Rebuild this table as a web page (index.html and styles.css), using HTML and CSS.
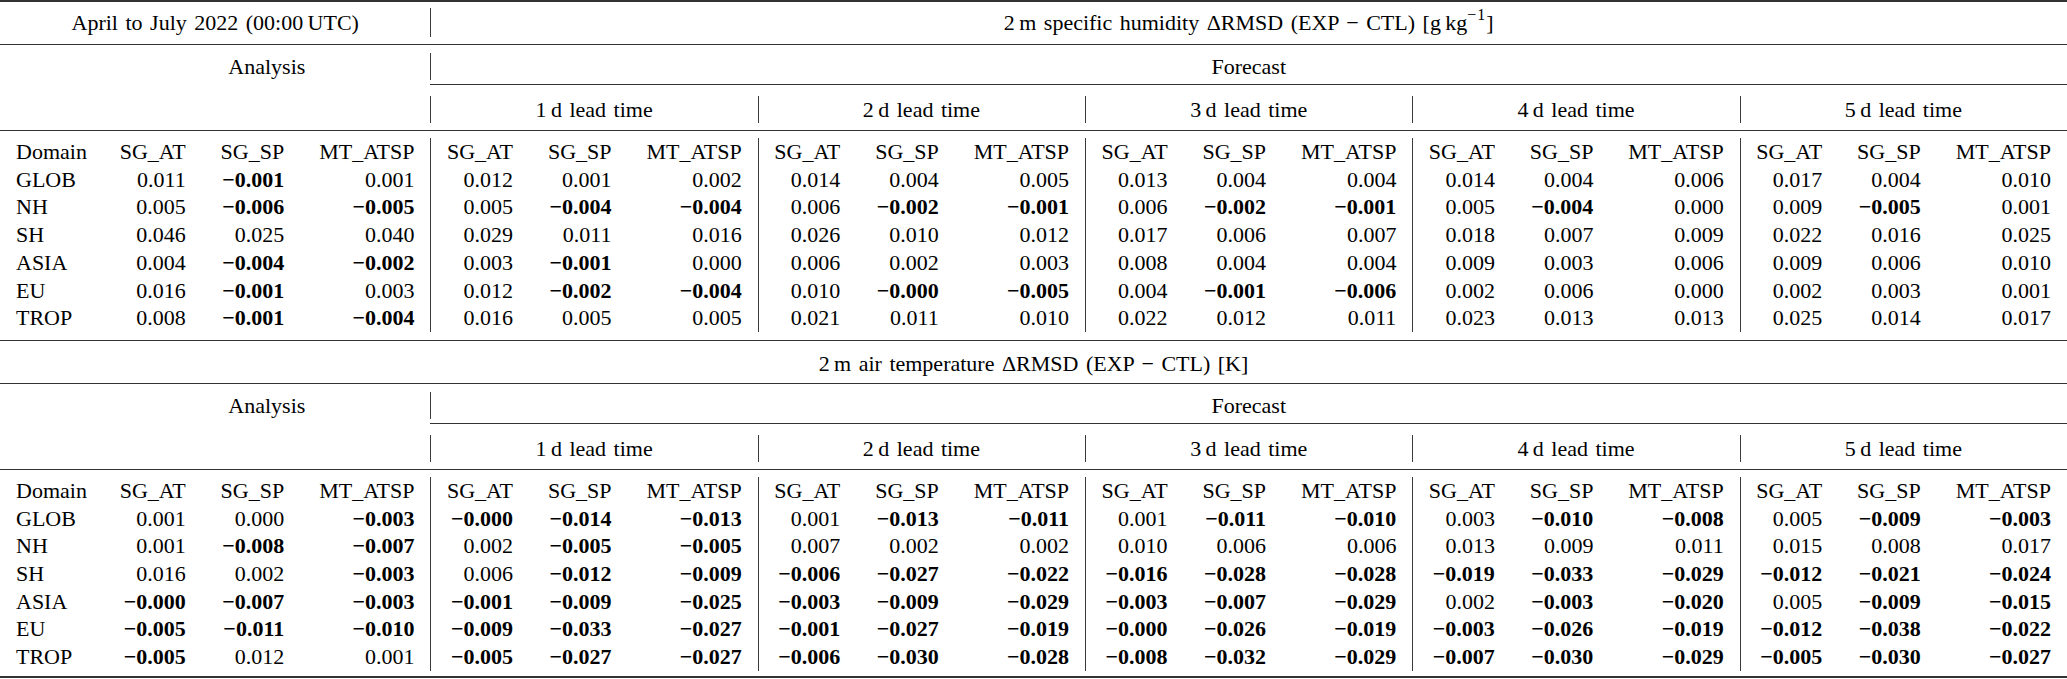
FILE: index.html
```html
<!DOCTYPE html>
<html>
<head>
<meta charset="utf-8">
<title>Table</title>
<link rel="stylesheet" href="styles.css">
</head>
<body>
<table class="tbl">
<colgroup>
<col class="c-dom"><col class="c-sg"><col class="c-sg"><col class="c-mt">
<col class="c-sg"><col class="c-sg"><col class="c-mt">
<col class="c-sg"><col class="c-sg"><col class="c-mt">
<col class="c-sg"><col class="c-sg"><col class="c-mt">
<col class="c-sg"><col class="c-sg"><col class="c-mt">
<col class="c-sg"><col class="c-sg"><col class="c-mt">
</colgroup>
<tbody>
<tr class="rr"><td colspan="19"><div class="rule top"></div></td></tr>
<tr class="r1"><td colspan="4" class="ctr">April to July 2022 (00:00&thinsp;UTC)</td><td colspan="15" class="ctr bar">2&thinsp;m specific humidity ΔRMSD (EXP − CTL) [g&thinsp;kg<sup>−1</sup>]</td></tr>
<tr class="rr"><td colspan="19"><div class="rule mid"></div></td></tr>
<tr class="r2"><td></td><td colspan="3" class="ctr">Analysis</td><td colspan="15" class="ctr bar">Forecast</td></tr>
<tr class="rr"><td colspan="4"></td><td colspan="15"><div class="rule cmid"></div></td></tr>
<tr class="r3"><td colspan="4"></td><td colspan="3" class="ctr bar">1&thinsp;d lead time</td><td colspan="3" class="ctr bar">2&thinsp;d lead time</td><td colspan="3" class="ctr bar">3&thinsp;d lead time</td><td colspan="3" class="ctr bar">4&thinsp;d lead time</td><td colspan="3" class="ctr bar">5&thinsp;d lead time</td></tr>
<tr class="rr"><td colspan="19"><div class="rule mid2"></div></td></tr>
<tr class="d"><td class="dom">Domain</td><td>SG_AT</td><td>SG_SP</td><td>MT_ATSP</td><td class="bar">SG_AT</td><td>SG_SP</td><td>MT_ATSP</td><td class="bar">SG_AT</td><td>SG_SP</td><td>MT_ATSP</td><td class="bar">SG_AT</td><td>SG_SP</td><td>MT_ATSP</td><td class="bar">SG_AT</td><td>SG_SP</td><td>MT_ATSP</td><td class="bar">SG_AT</td><td>SG_SP</td><td>MT_ATSP</td></tr>
<tr class="d"><td class="dom">GLOB</td><td>0.011</td><td><b>−0.001</b></td><td>0.001</td><td class="bar">0.012</td><td>0.001</td><td>0.002</td><td class="bar">0.014</td><td>0.004</td><td>0.005</td><td class="bar">0.013</td><td>0.004</td><td>0.004</td><td class="bar">0.014</td><td>0.004</td><td>0.006</td><td class="bar">0.017</td><td>0.004</td><td>0.010</td></tr>
<tr class="d"><td class="dom">NH</td><td>0.005</td><td><b>−0.006</b></td><td><b>−0.005</b></td><td class="bar">0.005</td><td><b>−0.004</b></td><td><b>−0.004</b></td><td class="bar">0.006</td><td><b>−0.002</b></td><td><b>−0.001</b></td><td class="bar">0.006</td><td><b>−0.002</b></td><td><b>−0.001</b></td><td class="bar">0.005</td><td><b>−0.004</b></td><td>0.000</td><td class="bar">0.009</td><td><b>−0.005</b></td><td>0.001</td></tr>
<tr class="d"><td class="dom">SH</td><td>0.046</td><td>0.025</td><td>0.040</td><td class="bar">0.029</td><td>0.011</td><td>0.016</td><td class="bar">0.026</td><td>0.010</td><td>0.012</td><td class="bar">0.017</td><td>0.006</td><td>0.007</td><td class="bar">0.018</td><td>0.007</td><td>0.009</td><td class="bar">0.022</td><td>0.016</td><td>0.025</td></tr>
<tr class="d"><td class="dom">ASIA</td><td>0.004</td><td><b>−0.004</b></td><td><b>−0.002</b></td><td class="bar">0.003</td><td><b>−0.001</b></td><td>0.000</td><td class="bar">0.006</td><td>0.002</td><td>0.003</td><td class="bar">0.008</td><td>0.004</td><td>0.004</td><td class="bar">0.009</td><td>0.003</td><td>0.006</td><td class="bar">0.009</td><td>0.006</td><td>0.010</td></tr>
<tr class="d"><td class="dom">EU</td><td>0.016</td><td><b>−0.001</b></td><td>0.003</td><td class="bar">0.012</td><td><b>−0.002</b></td><td><b>−0.004</b></td><td class="bar">0.010</td><td><b>−0.000</b></td><td><b>−0.005</b></td><td class="bar">0.004</td><td><b>−0.001</b></td><td><b>−0.006</b></td><td class="bar">0.002</td><td>0.006</td><td>0.000</td><td class="bar">0.002</td><td>0.003</td><td>0.001</td></tr>
<tr class="d"><td class="dom">TROP</td><td>0.008</td><td><b>−0.001</b></td><td><b>−0.004</b></td><td class="bar">0.016</td><td>0.005</td><td>0.005</td><td class="bar">0.021</td><td>0.011</td><td>0.010</td><td class="bar">0.022</td><td>0.012</td><td>0.011</td><td class="bar">0.023</td><td>0.013</td><td>0.013</td><td class="bar">0.025</td><td>0.014</td><td>0.017</td></tr>
<tr class="rr"><td colspan="19"><div class="rule mid3"></div></td></tr>
<tr class="t2"><td colspan="19" class="ctr">2&thinsp;m air temperature ΔRMSD (EXP − CTL) [K]</td></tr>
<tr class="rr"><td colspan="19"><div class="rule mid4"></div></td></tr>
<tr class="r2"><td></td><td colspan="3" class="ctr">Analysis</td><td colspan="15" class="ctr bar">Forecast</td></tr>
<tr class="rr"><td colspan="4"></td><td colspan="15"><div class="rule cmid"></div></td></tr>
<tr class="r3"><td colspan="4"></td><td colspan="3" class="ctr bar">1&thinsp;d lead time</td><td colspan="3" class="ctr bar">2&thinsp;d lead time</td><td colspan="3" class="ctr bar">3&thinsp;d lead time</td><td colspan="3" class="ctr bar">4&thinsp;d lead time</td><td colspan="3" class="ctr bar">5&thinsp;d lead time</td></tr>
<tr class="rr"><td colspan="19"><div class="rule mid2"></div></td></tr>
<tr class="d"><td class="dom">Domain</td><td>SG_AT</td><td>SG_SP</td><td>MT_ATSP</td><td class="bar">SG_AT</td><td>SG_SP</td><td>MT_ATSP</td><td class="bar">SG_AT</td><td>SG_SP</td><td>MT_ATSP</td><td class="bar">SG_AT</td><td>SG_SP</td><td>MT_ATSP</td><td class="bar">SG_AT</td><td>SG_SP</td><td>MT_ATSP</td><td class="bar">SG_AT</td><td>SG_SP</td><td>MT_ATSP</td></tr>
<tr class="d"><td class="dom">GLOB</td><td>0.001</td><td>0.000</td><td><b>−0.003</b></td><td class="bar"><b>−0.000</b></td><td><b>−0.014</b></td><td><b>−0.013</b></td><td class="bar">0.001</td><td><b>−0.013</b></td><td><b>−0.011</b></td><td class="bar">0.001</td><td><b>−0.011</b></td><td><b>−0.010</b></td><td class="bar">0.003</td><td><b>−0.010</b></td><td><b>−0.008</b></td><td class="bar">0.005</td><td><b>−0.009</b></td><td><b>−0.003</b></td></tr>
<tr class="d"><td class="dom">NH</td><td>0.001</td><td><b>−0.008</b></td><td><b>−0.007</b></td><td class="bar">0.002</td><td><b>−0.005</b></td><td><b>−0.005</b></td><td class="bar">0.007</td><td>0.002</td><td>0.002</td><td class="bar">0.010</td><td>0.006</td><td>0.006</td><td class="bar">0.013</td><td>0.009</td><td>0.011</td><td class="bar">0.015</td><td>0.008</td><td>0.017</td></tr>
<tr class="d"><td class="dom">SH</td><td>0.016</td><td>0.002</td><td><b>−0.003</b></td><td class="bar">0.006</td><td><b>−0.012</b></td><td><b>−0.009</b></td><td class="bar"><b>−0.006</b></td><td><b>−0.027</b></td><td><b>−0.022</b></td><td class="bar"><b>−0.016</b></td><td><b>−0.028</b></td><td><b>−0.028</b></td><td class="bar"><b>−0.019</b></td><td><b>−0.033</b></td><td><b>−0.029</b></td><td class="bar"><b>−0.012</b></td><td><b>−0.021</b></td><td><b>−0.024</b></td></tr>
<tr class="d"><td class="dom">ASIA</td><td><b>−0.000</b></td><td><b>−0.007</b></td><td><b>−0.003</b></td><td class="bar"><b>−0.001</b></td><td><b>−0.009</b></td><td><b>−0.025</b></td><td class="bar"><b>−0.003</b></td><td><b>−0.009</b></td><td><b>−0.029</b></td><td class="bar"><b>−0.003</b></td><td><b>−0.007</b></td><td><b>−0.029</b></td><td class="bar">0.002</td><td><b>−0.003</b></td><td><b>−0.020</b></td><td class="bar">0.005</td><td><b>−0.009</b></td><td><b>−0.015</b></td></tr>
<tr class="d"><td class="dom">EU</td><td><b>−0.005</b></td><td><b>−0.011</b></td><td><b>−0.010</b></td><td class="bar"><b>−0.009</b></td><td><b>−0.033</b></td><td><b>−0.027</b></td><td class="bar"><b>−0.001</b></td><td><b>−0.027</b></td><td><b>−0.019</b></td><td class="bar"><b>−0.000</b></td><td><b>−0.026</b></td><td><b>−0.019</b></td><td class="bar"><b>−0.003</b></td><td><b>−0.026</b></td><td><b>−0.019</b></td><td class="bar"><b>−0.012</b></td><td><b>−0.038</b></td><td><b>−0.022</b></td></tr>
<tr class="d"><td class="dom">TROP</td><td><b>−0.005</b></td><td>0.012</td><td>0.001</td><td class="bar"><b>−0.005</b></td><td><b>−0.027</b></td><td><b>−0.027</b></td><td class="bar"><b>−0.006</b></td><td><b>−0.030</b></td><td><b>−0.028</b></td><td class="bar"><b>−0.008</b></td><td><b>−0.032</b></td><td><b>−0.029</b></td><td class="bar"><b>−0.007</b></td><td><b>−0.030</b></td><td><b>−0.029</b></td><td class="bar"><b>−0.005</b></td><td><b>−0.030</b></td><td><b>−0.027</b></td></tr>
<tr class="rr"><td colspan="19"><div class="rule bottom"></div></td></tr>
</tbody>
</table>
</body>
</html>
```

FILE: styles.css
```css
html, body {
  margin: 0;
  padding: 0;
  background: #ffffff;
}
body {
  font-family: "Liberation Serif", "Times New Roman", serif;
  font-size: 22px;
  color: #000000;
  word-spacing: 2px;
}
.tbl {
  width: 2067px;
  border-collapse: separate;
  border-spacing: 0;
  table-layout: fixed;
}
.c-dom { width: 103.2px; }
.c-sg { width: 98.5px; }
.c-mt { width: 130.3px; }

td {
  padding: 0 16px;
  white-space: nowrap;
  text-align: right;
  vertical-align: middle;
}
td.ctr { text-align: center; padding: 0; }
td.dom { text-align: left; }
td.bar { box-shadow: inset 1px 0 0 #3a3a3a; }

.rr td { padding: 0; line-height: 0; font-size: 0; }
.rule { height: 1px; background: #333333; }
.rule.top { height: 2px; margin: 0 0 6px; background: #333333; }
.rule.mid { margin: 7px 0 8px; }
.rule.cmid { margin: 4px 0 11px; }
.rule.mid2 { margin: 7px 0 7px; }
.rule.mid3 { margin: 8px 0 0; }
.rule.mid4 { margin: 0 0 8px; }
.rule.bottom { height: 2px; margin: 5px 0 0; background: #333333; }

.r1 td { line-height: 29px; height: 29px; }
.r2 td { line-height: 27px; height: 27px; }
.r3 td { line-height: 27px; height: 27px; }
.d td { line-height: 27.7px; height: 27.7px; }
.t2 td { line-height: 39px; padding-top: 3px; }

sup {
  font-size: 16px;
  line-height: 0;
  letter-spacing: 1px;
  vertical-align: 10px;
}
```
